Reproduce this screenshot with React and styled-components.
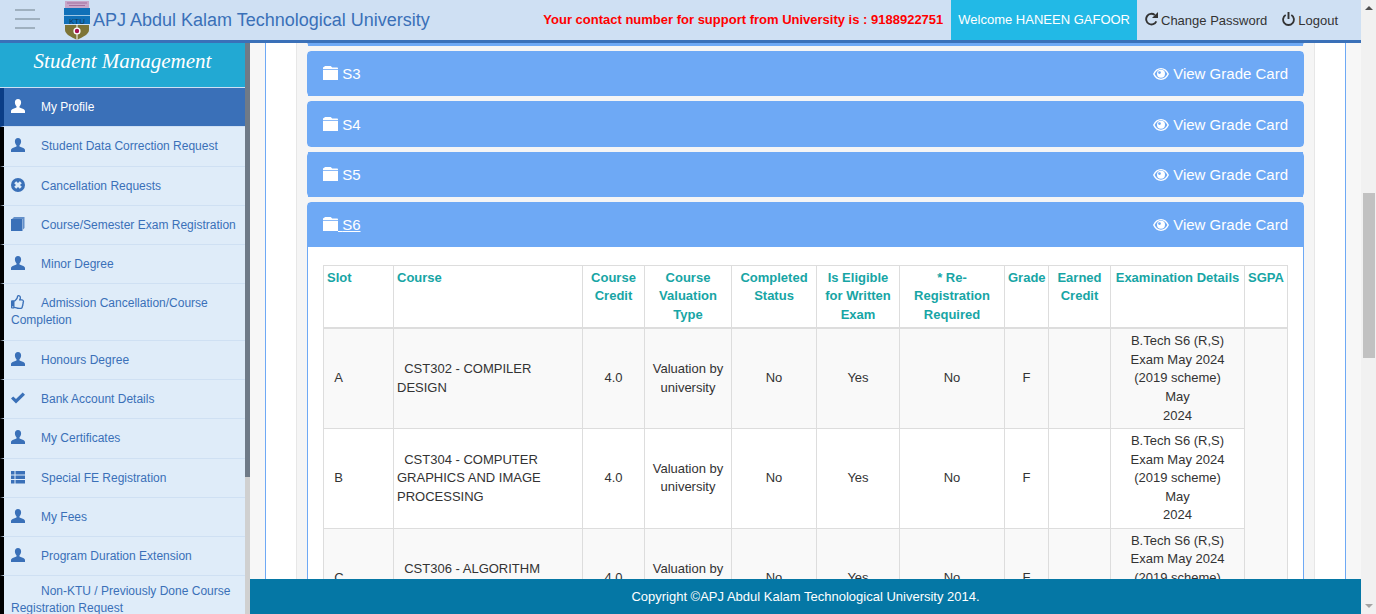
import React from 'react';
import styled, { createGlobalStyle } from 'styled-components';
import { FaRegThumbsUp } from 'react-icons/fa';

const GlobalStyle = createGlobalStyle`
  html, body {
    margin: 0;
    height: 100%;
    overflow: hidden;
    font-family: "Liberation Sans", Arial, sans-serif;
    color: #333;
  }
  * {
    box-sizing: border-box;
  }
`;

const Shell = styled.div`
  display: flex;
  height: 100vh;
  overflow: hidden;
`;
const Page = styled.div`
  flex: 1;
  min-width: 0;
  display: flex;
  flex-direction: column;
`;
const PageScrollbar = styled.div`
  width: 15px;
  flex: none;
  background: #f1f1f1;
  display: flex;
  flex-direction: column;
  align-items: center;
`;
const ScrollArrow = styled.div`
  width: 0;
  height: 0;
  flex: none;
  margin: 6px 0;
  border-left: 4px solid transparent;
  border-right: 4px solid transparent;
  ${p => (p.$down ? 'border-top: 4px solid #a3a3a3;' : 'border-bottom: 4px solid #505050;')}
`;
const ScrollThumb = styled.div`
  width: 12px;
  height: 165px;
  flex: none;
  margin-top: 177px;
  margin-bottom: auto;
  background: #c1c1c1;
`;

const Header = styled.header`
  height: 43px;
  flex: none;
  display: flex;
  align-items: flex-start;
  background: #cfe0f3;
  border-bottom: 3px solid #3a70b8;
`;
const Burger = styled.div`
  width: 64px;
  height: 40px;
  flex: none;
  padding: 9px 0 0 15px;
  display: flex;
  flex-direction: column;
  gap: 7px;
`;
const BurgerLine = styled.span`
  display: block;
  height: 2px;
  width: ${p => (p.$wide ? 25 : 20)}px;
  background: #9fb0bf;
`;
const Logo = styled.svg`
  width: 26px;
  height: 39px;
  margin-top: 1px;
  flex: none;
`;
const Title = styled.div`
  margin-left: 3px;
  font-size: 18px;
  line-height: 40px;
  color: #3a70b8;
  white-space: nowrap;
`;
const Support = styled.div`
  margin-left: auto;
  margin-right: 8px;
  font-size: 13px;
  font-weight: bold;
  line-height: 40px;
  color: #f00;
  white-space: nowrap;
`;
const Welcome = styled.div`
  height: 40px;
  padding: 0 7px;
  font-size: 13px;
  line-height: 40px;
  color: #fff;
  background: #22b9e6;
  white-space: nowrap;
`;
const HeaderLink = styled.a`
  display: flex;
  align-items: center;
  gap: 3px;
  height: 40px;
  margin-left: ${p => p.$gap}px;
  margin-right: ${p => p.$end || 0}px;
  font-size: 13px;
  color: #333;
  white-space: nowrap;
  svg {
    margin-top: -2px;
  }
`;

const Below = styled.div`
  flex: 1;
  min-height: 0;
  display: flex;
`;
const Sidebar = styled.aside`
  width: 250px;
  flex: none;
  display: flex;
  overflow: hidden;
`;
const SideColumn = styled.nav`
  width: 245px;
  flex: none;
  background: #dfecf9;
  overflow: hidden;
`;
const SideTitle = styled.div`
  height: 45px;
  padding-top: 5px;
  font-family: "Liberation Serif", "Times New Roman", serif;
  font-style: italic;
  font-size: 21px;
  line-height: 26px;
  text-align: center;
  color: #fff;
  background: #22a9d3;
  border-bottom: 1px solid #cfe0f3;
`;
const SideItem = styled.a`
  display: block;
  padding: ${p => (p.$plain ? 7 : 11)}px 7px ${p => (p.$plain ? 7 : 10.14)}px;
  min-height: 39.14px;
  font-size: 12px;
  line-height: 17.14px;
  color: ${p => (p.$active ? '#fff' : '#3a70b8')};
  background: ${p => (p.$active ? '#3a70b8' : 'transparent')};
  border-left: 4px solid ${p => (p.$active ? '#0a3d86' : '#000')};
  border-bottom: 1px solid #cfe0f3;
`;
const SideIcon = styled.span`
  display: inline-block;
  width: 30px;
  svg {
    display: inline-block;
    width: 14px;
    height: 14px;
    vertical-align: -2px;
    fill: currentColor;
  }
`;
const SideBar = styled.div`
  width: 5px;
  flex: none;
  background: #d0d0d0;
`;
const SideThumb = styled.div`
  height: 434px;
  background: #6f7a87;
`;

const Main = styled.main`
  flex: 1;
  min-width: 0;
  display: flex;
  flex-direction: column;
`;
const Content = styled.div`
  flex: 1;
  min-height: 0;
  overflow: hidden;
  padding: 0 15px;
  background: #f7f7f7;
`;
const Card = styled.div`
  padding: 0 30px;
  background: #fff;
  border-left: 1px solid #6ea9f5;
  border-right: 1px solid #6ea9f5;
`;
const Well = styled.div`
  padding: 0 10px;
  overflow: hidden;
  background: #f5f5f5;
  border-left: 1px solid #e7e7e7;
  border-right: 1px solid #e7e7e7;
`;
const PanelStack = styled.div`
  margin-top: -42.4px;
  display: flex;
  flex-direction: column;
  gap: 5px;
`;
const Panel = styled.section`
  border: 1px solid #6ea9f5;
  border-radius: 4px;
  background: #fff;
`;
const PanelHead = styled.div`
  height: 44.4px;
  margin: -0.5px 0;
  padding: 0 15px;
  display: flex;
  align-items: center;
  justify-content: space-between;
  font-size: 15px;
  color: #fff;
  background: #6ea9f5;
  svg {
    fill: #fff;
    vertical-align: -1px;
  }
`;
const PanelName = styled.a`
  text-decoration: ${p => (p.$open ? 'underline' : 'none')};
`;
const PanelBody = styled.div`
  padding: 18px 15px;
`;
const Grades = styled.table`
  width: 965px;
  table-layout: fixed;
  border-collapse: collapse;
  font-size: 13px;
  line-height: 18.57px;
`;
const Th = styled.th`
  padding: 3px;
  vertical-align: top;
  font-weight: bold;
  text-align: ${p => (p.$left ? 'left' : 'center')};
  color: #17a5a5;
  border: 1px solid #ddd;
  border-bottom-width: 2px;
`;
const Row = styled.tr`
  background: ${p => (p.$odd ? '#f9f9f9' : '#fff')};
`;
const Td = styled.td`
  padding: 3px;
  vertical-align: middle;
  text-align: ${p => (p.$left ? 'left' : 'center')};
  border: 1px solid #ddd;
`;
const SgpaCell = styled(Td)`
  background: #f9f9f9;
`;
const Footer = styled.footer`
  height: 35px;
  flex: none;
  font-size: 13px;
  line-height: 35px;
  text-align: center;
  color: #fff;
  background: #0577a5;
`;

const UserIcon = () => (
  <svg viewBox="0 0 14 14">
    <path d="M7 0C5 0 3.9 1.5 3.9 3.5c0 1.5.6 2.9 1.6 3.7v1.2L1.7 10C.6 10.5 0 11.2 0 12.2V14h14v-1.8c0-1-.6-1.7-1.7-2.2L8.5 8.4V7.2c1-.8 1.6-2.2 1.6-3.7C10.100 1.5 9 0 7 0z" />
  </svg>
);
const RemoveIcon = () => (
  <svg viewBox="0 0 14 14">
    <path
      fillRule="evenodd"
      d="M7 0a7 7 0 1 0 0 14A7 7 0 0 0 7 0zM5.200 3.200 7 5l1.800-1.800 2 2L9 7l1.800 1.800-2 2L7 9l-1.800 1.800-2-2L5 7 3.200 5.200z"
    />
  </svg>
);
const BookIcon = () => (
  <svg viewBox="0 0 14 14">
    <path d="M1 2 3 0h10.500v11L12 12.500V2z" opacity="0.75" />
    <path d="M0 2h11.500v12H0z" />
  </svg>
);
const CheckIcon = () => (
  <svg viewBox="0 0 14 14">
    <path d="M5 12.500 0 7.600l2.200-2.200L5 8.100 11.700 1.500 14 3.700z" />
  </svg>
);
const ListIcon = () => (
  <svg viewBox="0 0 14 14">
    <path d="M0 1h3.500v3.500H0zM4.500 1H14v3.500H4.500zM0 5.500h3.500V9H0zM4.500 5.500H14V9H4.500zM0 10h3.500v3.500H0zM4.500 10H14v3.500H4.500z" />
  </svg>
);
const FolderIcon = () => (
  <svg width="15" height="14" viewBox="0 0 15 14">
    <path d="M0 3V1.500C1 .6 1.800 0 3 0h4c1 0 1.600.6 2.200 1.600H14c.6 0 1 .5 1 1V3z" />
    <path d="M0 3.800h15V14H0z" />
  </svg>
);
const EyeIcon = () => (
  <svg width="16" height="12" viewBox="0 0 16 12">
    <path
      fillRule="evenodd"
      d="M8 0C4.500 0 1.700 2.300 0 6c1.700 3.700 4.500 6 8 6s6.300-2.300 8-6c-1.700-3.700-4.500-6-8-6zM8 1.300c2.600 0 4.900 1.800 6.400 4.700-1.500 2.900-3.800 4.700-6.400 4.700S3.100 8.900 1.600 6C3.100 3.100 5.400 1.300 8 1.300z"
    />
    <path
      fillRule="evenodd"
      d="M8 1.800a4 4 0 1 0 0 8 4 4 0 0 0 0-8zM6.500 3.200a1.400 1.400 0 1 1 0 2.800 1.400 1.400 0 0 1 0-2.800z"
    />
  </svg>
);
const RefreshIcon = () => (
  <svg width="13" height="14" viewBox="0 0 13 14" fill="none">
    <path d="M11.300 9.300A5.300 5.300 0 1 1 9.800 3" stroke="#333" strokeWidth="1.900" />
    <path d="M13 0v6H7z" fill="#333" />
  </svg>
);
const PowerIcon = () => (
  <svg width="13" height="14" viewBox="0 0 13 14" fill="none">
    <path d="M3.700 3A5.400 5.400 0 1 0 9.300 3" stroke="#333" strokeWidth="1.800" />
    <path d="M6.500 0v7" stroke="#333" strokeWidth="1.900" />
  </svg>
);

const menu = [
  { icon: <UserIcon />, label: 'My Profile', active: true },
  { icon: <UserIcon />, label: 'Student Data Correction Request' },
  { icon: <RemoveIcon />, label: 'Cancellation Requests' },
  { icon: <BookIcon />, label: 'Course/Semester Exam Registration' },
  { icon: <UserIcon />, label: 'Minor Degree' },
  { icon: <FaRegThumbsUp />, label: 'Admission Cancellation/Course Completion' },
  { icon: <UserIcon />, label: 'Honours Degree' },
  { icon: <CheckIcon />, label: 'Bank Account Details' },
  { icon: <UserIcon />, label: 'My Certificates' },
  { icon: <ListIcon />, label: 'Special FE Registration' },
  { icon: <UserIcon />, label: 'My Fees' },
  { icon: <UserIcon />, label: 'Program Duration Extension' },
  { label: 'Non-KTU / Previously Done Course Registration Request' },
];

const columns = [
  { w: 70, name: 'Slot', left: true },
  { w: 189, name: 'Course', left: true },
  { w: 62, name: 'Course Credit' },
  { w: 87, name: 'Course Valuation Type' },
  { w: 85, name: 'Completed Status' },
  { w: 83, name: 'Is Eligible for Written Exam' },
  { w: 105, name: '* Re-Registration Required' },
  { w: 44, name: 'Grade' },
  { w: 62, name: 'Earned Credit' },
  { w: 134, name: 'Examination Details' },
  { w: 43, name: 'SGPA' },
];

const rows = [
  { slot: 'A', course: 'CST302 - COMPILER DESIGN' },
  { slot: 'B', course: 'CST304 - COMPUTER GRAPHICS AND IMAGE PROCESSING' },
  { slot: 'C', course: 'CST306 - ALGORITHM ANALYSIS AND DESIGN' },
];

const GradePanel = ({ name, open, children }) => (
  <Panel>
    <PanelHead>
      <PanelName $open={open}>
        <FolderIcon /> {name}
      </PanelName>
      <span>
        <EyeIcon /> View Grade Card
      </span>
    </PanelHead>
    {children}
  </Panel>
);

export default function App() {
  return (
    <Shell>
      <GlobalStyle />
      <Page>
        <Header>
          <Burger>
            <BurgerLine />
            <BurgerLine $wide />
            <BurgerLine />
          </Burger>
          <Logo viewBox="0 0 26 39">
            <rect x="1" width="24" height="7" fill="#c9a7c9" />
            <rect x="3" y="1.500" width="20" height="1" fill="#a4709f" />
            <rect x="5" y="4" width="16" height="1" fill="#a4709f" />
            <rect y="7" width="26" height="16" fill="#1070b8" />
            <rect y="14" width="26" height="1" fill="#9cc6e6" />
            <text x="13" y="22.500" fontSize="8" textAnchor="middle" fill="#123a5c" fontFamily="Liberation Sans">
              KTU
            </text>
            <path d="M1 24h24v5c0 4-6 7-12 10C7 36 1 33 1 29z" fill="#7d7436" />
            <rect x="12.500" y="23" width="1" height="16" fill="#fff" />
            <circle cx="13" cy="30" r="3.600" fill="#fff" />
            <circle cx="13" cy="30" r="2.200" fill="#a5134f" />
          </Logo>
          <Title>APJ Abdul Kalam Technological University</Title>
          <Support>Your contact number for support from University is : 9188922751</Support>
          <Welcome>Welcome HANEEN GAFOOR</Welcome>
          <HeaderLink $gap={8}>
            <RefreshIcon /> Change Password
          </HeaderLink>
          <HeaderLink $gap={15} $end={23}>
            <PowerIcon /> Logout
          </HeaderLink>
        </Header>
        <Below>
          <Sidebar>
            <SideColumn>
              <SideTitle>Student Management</SideTitle>
              {menu.map(item => (
                <SideItem key={item.label} $active={item.active} $plain={!item.icon}>
                  <SideIcon>{item.icon}</SideIcon>
                  {item.label}
                </SideItem>
              ))}
            </SideColumn>
            <SideBar>
              <SideThumb />
            </SideBar>
          </Sidebar>
          <Main>
            <Content>
              <Card>
                <Well>
                  <PanelStack>
                    <GradePanel name="S2" />
                    <GradePanel name="S3" />
                    <GradePanel name="S4" />
                    <GradePanel name="S5" />
                    <GradePanel name="S6" open>
                      <PanelBody>
                        <Grades>
                          <colgroup>
                            {columns.map(c => (
                              <col key={c.name} width={c.w} />
                            ))}
                          </colgroup>
                          <thead>
                            <tr>
                              {columns.map(c => (
                                <Th key={c.name} $left={c.left}>
                                  {c.name}
                                </Th>
                              ))}
                            </tr>
                          </thead>
                          <tbody>
                            {rows.map((r, i) => (
                              <Row key={r.slot} $odd={i % 2 === 0}>
                                <Td $left>{'\u00a0\u00a0' + r.slot}</Td>
                                <Td $left>{'\u00a0\u00a0' + r.course}</Td>
                                <Td>4.0</Td>
                                <Td>Valuation by university</Td>
                                <Td>No</Td>
                                <Td>Yes</Td>
                                <Td>No</Td>
                                <Td>F</Td>
                                <Td />
                                <Td>
                                  B.Tech S6 (R,S) Exam May 2024 (2019 scheme)
                                  <br />
                                  May
                                  <br />
                                  2024
                                </Td>
                                {i === 0 && <SgpaCell rowSpan={3} />}
                              </Row>
                            ))}
                          </tbody>
                        </Grades>
                      </PanelBody>
                    </GradePanel>
                  </PanelStack>
                </Well>
              </Card>
            </Content>
            <Footer>Copyright ©APJ Abdul Kalam Technological University 2014.</Footer>
          </Main>
        </Below>
      </Page>
      <PageScrollbar>
        <ScrollArrow />
        <ScrollThumb />
        <ScrollArrow $down />
      </PageScrollbar>
    </Shell>
  );
}
